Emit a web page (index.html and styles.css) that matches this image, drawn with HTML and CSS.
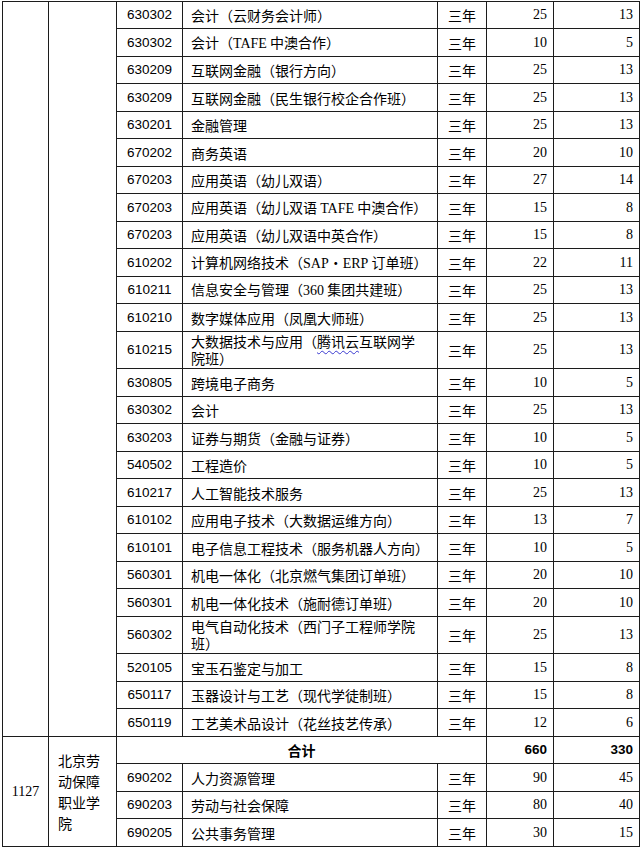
FILE: index.html
```html
<!DOCTYPE html>
<html lang="zh-CN">
<head>
<meta charset="utf-8">
<link rel="stylesheet" href="styles.css">
</head>
<body>
<table class="grid">
  <colgroup>
    <col class="c-id"><col class="c-school"><col class="c-code"><col class="c-name"><col class="c-years"><col class="c-n1"><col class="c-n2">
  </colgroup>
  <tbody>
    <tr><td class="id" rowspan="26"></td><td class="school" rowspan="26"></td><td class="code">630302</td><td class="name">会计（云财务会计师）</td><td class="years">三年</td><td class="num">25</td><td class="num">13</td></tr>
    <tr><td class="code">630302</td><td class="name">会计（<span class="lat">TAFE</span> 中澳合作）</td><td class="years">三年</td><td class="num">10</td><td class="num">5</td></tr>
    <tr><td class="code">630209</td><td class="name">互联网金融（银行方向）</td><td class="years">三年</td><td class="num">25</td><td class="num">13</td></tr>
    <tr><td class="code">630209</td><td class="name">互联网金融（民生银行校企合作班）</td><td class="years">三年</td><td class="num">25</td><td class="num">13</td></tr>
    <tr><td class="code">630201</td><td class="name">金融管理</td><td class="years">三年</td><td class="num">25</td><td class="num">13</td></tr>
    <tr><td class="code">670202</td><td class="name">商务英语</td><td class="years">三年</td><td class="num">20</td><td class="num">10</td></tr>
    <tr><td class="code">670203</td><td class="name">应用英语（幼儿双语）</td><td class="years">三年</td><td class="num">27</td><td class="num">14</td></tr>
    <tr><td class="code">670203</td><td class="name">应用英语（幼儿双语 <span class="lat">TAFE</span> 中澳合作）</td><td class="years">三年</td><td class="num">15</td><td class="num">8</td></tr>
    <tr><td class="code">670203</td><td class="name">应用英语（幼儿双语中英合作）</td><td class="years">三年</td><td class="num">15</td><td class="num">8</td></tr>
    <tr><td class="code">610202</td><td class="name">计算机网络技术（<span class="lat">SAP</span>・<span class="lat">ERP</span> 订单班）</td><td class="years">三年</td><td class="num">22</td><td class="num">11</td></tr>
    <tr><td class="code">610211</td><td class="name">信息安全与管理（<span class="lat">360</span> 集团共建班）</td><td class="years">三年</td><td class="num">25</td><td class="num">13</td></tr>
    <tr><td class="code">610210</td><td class="name">数字媒体应用（凤凰大师班）</td><td class="years">三年</td><td class="num">25</td><td class="num">13</td></tr>
    <tr class="tall"><td class="code">610215</td><td class="name">大数据技术与应用（<span class="spell">腾讯云</span>互联网学<br>院班）</td><td class="years">三年</td><td class="num">25</td><td class="num">13</td></tr>
    <tr><td class="code">630805</td><td class="name">跨境电子商务</td><td class="years">三年</td><td class="num">10</td><td class="num">5</td></tr>
    <tr><td class="code">630302</td><td class="name">会计</td><td class="years">三年</td><td class="num">25</td><td class="num">13</td></tr>
    <tr><td class="code">630203</td><td class="name">证券与期货（金融与证券）</td><td class="years">三年</td><td class="num">10</td><td class="num">5</td></tr>
    <tr><td class="code">540502</td><td class="name">工程造价</td><td class="years">三年</td><td class="num">10</td><td class="num">5</td></tr>
    <tr><td class="code">610217</td><td class="name">人工智能技术服务</td><td class="years">三年</td><td class="num">25</td><td class="num">13</td></tr>
    <tr><td class="code">610102</td><td class="name">应用电子技术（大数据运维方向）</td><td class="years">三年</td><td class="num">13</td><td class="num">7</td></tr>
    <tr><td class="code">610101</td><td class="name">电子信息工程技术（服务机器人方向）</td><td class="years">三年</td><td class="num">10</td><td class="num">5</td></tr>
    <tr><td class="code">560301</td><td class="name">机电一体化（北京燃气集团订单班）</td><td class="years">三年</td><td class="num">20</td><td class="num">10</td></tr>
    <tr><td class="code">560301</td><td class="name">机电一体化技术（施耐德订单班）</td><td class="years">三年</td><td class="num">20</td><td class="num">10</td></tr>
    <tr class="tall"><td class="code">560302</td><td class="name">电气自动化技术（西门子工程师学院<br>班）</td><td class="years">三年</td><td class="num">25</td><td class="num">13</td></tr>
    <tr><td class="code">520105</td><td class="name">宝玉石鉴定与加工</td><td class="years">三年</td><td class="num">15</td><td class="num">8</td></tr>
    <tr><td class="code">650117</td><td class="name">玉器设计与工艺（现代学徒制班）</td><td class="years">三年</td><td class="num">15</td><td class="num">8</td></tr>
    <tr><td class="code">650119</td><td class="name">工艺美术品设计（花丝技艺传承）</td><td class="years">三年</td><td class="num">12</td><td class="num">6</td></tr>
    <tr><td class="id" rowspan="4">1127</td><td class="school" rowspan="4">北京劳动保障职业学院</td><td class="total-label" colspan="3">合计</td><td class="num total">660</td><td class="num total">330</td></tr>
    <tr><td class="code">690202</td><td class="name">人力资源管理</td><td class="years">三年</td><td class="num">90</td><td class="num">45</td></tr>
    <tr><td class="code">690203</td><td class="name">劳动与社会保障</td><td class="years">三年</td><td class="num">80</td><td class="num">40</td></tr>
    <tr><td class="code">690205</td><td class="name">公共事务管理</td><td class="years">三年</td><td class="num">30</td><td class="num">15</td></tr>
  </tbody>
</table>
</body>
</html>
```

FILE: styles.css
```css
html, body {
  margin: 0;
  padding: 0;
  background: #fff;
}

body {
  padding: 1px 0 0 2px;
  color: #000;
  font-family: "Noto Sans CJK SC", sans-serif;
  font-size: 14px;
}

.grid {
  border-collapse: collapse;
  table-layout: fixed;
  width: 637px;
}

.c-id { width: 46px; }
.c-school { width: 68px; }
.c-code { width: 66px; }
.c-name { width: 255px; }
.c-years { width: 49px; }
.c-n1 { width: 67px; }
.c-n2 { width: 86px; }

.grid td {
  border: 1px solid #1c1c1c;
  padding: 0;
  height: 26px;
  line-height: 16px;
  vertical-align: middle;
  white-space: nowrap;
}

.grid tr:nth-child(even) td {
  height: 27px;
}

.grid tr.tall td {
  height: 36px;
}

.grid tr.tall td.name {
  line-height: 17px;
}

.id {
  text-align: center;
  font-family: "Liberation Serif", serif;
  font-size: 14px;
}

.grid td.school {
  padding: 0 9px;
  white-space: normal;
  word-break: break-all;
  line-height: 21px;
  font-size: 14px;
}

.code {
  text-align: center;
  font-family: "Liberation Sans", sans-serif;
  font-size: 13.5px;
}

.grid td.name {
  padding-left: 8px;
  font-size: 14px;
}

.lat {
  font-family: "Liberation Serif", serif;
}

.spell {
  text-decoration: underline wavy #3a3ad0;
  text-decoration-thickness: 1px;
  text-underline-offset: 3px;
}

.years {
  text-align: center;
}

.grid td.num {
  text-align: right;
  padding-right: 6px;
  font-family: "Liberation Serif", serif;
  font-size: 14px;
}

.total-label {
  text-align: center;
  font-weight: bold;
}

.grid td.num.total {
  font-family: "Liberation Sans", sans-serif;
  font-weight: bold;
  font-size: 13.5px;
}
```
